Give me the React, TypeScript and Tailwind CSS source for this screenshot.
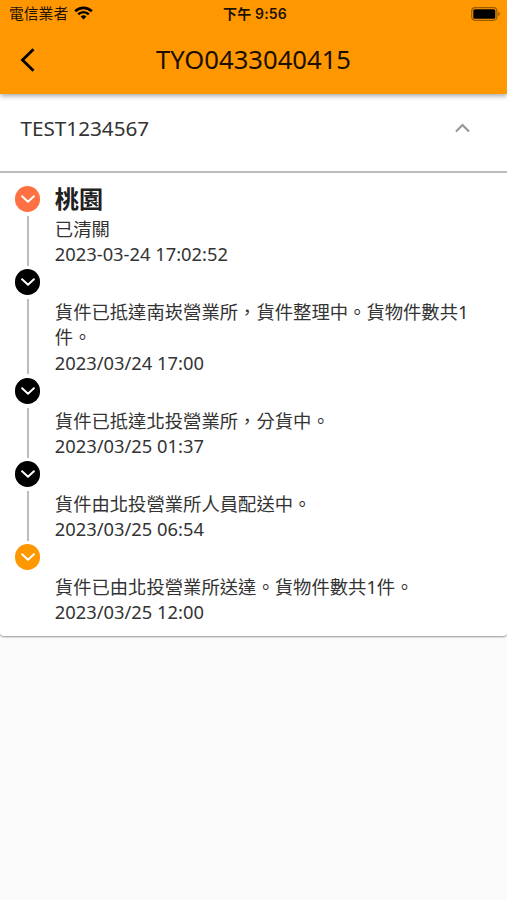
import React from "react";

type Step = {
  title?: string;
  message: string;
  time: string;
  dotClass: string;
};

const STEPS: Step[] = [
  { title: "桃園", message: "已清關", time: "2023-03-24 17:02:52", dotClass: "bg-[#ff7043]" },
  {
    message: "貨件已抵達南崁營業所，貨件整理中。貨物件數共1件。",
    time: "2023/03/24 17:00",
    dotClass: "bg-black",
  },
  { message: "貨件已抵達北投營業所，分貨中。", time: "2023/03/25 01:37", dotClass: "bg-black" },
  { message: "貨件由北投營業所人員配送中。", time: "2023/03/25 06:54", dotClass: "bg-black" },
  {
    message: "貨件已由北投營業所送達。貨物件數共1件。",
    time: "2023/03/25 12:00",
    dotClass: "bg-[#ff9800]",
  },
];

function StatusBar() {
  return (
    <div className="grid h-[27px] grid-cols-3 items-center pl-[9px] pr-[6px] text-[14.8px] leading-none">
      <div className="flex items-center gap-[6px]">
        <span className="whitespace-nowrap text-[#1f1200]">電信業者</span>
        <svg className="h-[14px] w-[19px]" viewBox="0 0 19 14" fill="none" stroke="currentColor">
          <path d="M1.2 5.2a11.8 11.8 0 0 1 16.6 0" strokeWidth="2.7" />
          <path d="M4.2 8.3a7.5 7.5 0 0 1 10.6 0" strokeWidth="2.4" />
          <path d="M6.6 10.6a4.1 4.1 0 0 1 5.8 0L9.5 13.5z" fill="currentColor" stroke="none" />
        </svg>
      </div>
      <span className="whitespace-nowrap text-center font-['Inter','Noto_Sans_CJK_TC',sans-serif] text-[14px] font-semibold tracking-[0.15px] text-[#1f1200]">
        下午 9:56
      </span>
      <svg className="h-[14px] w-[30px] justify-self-end" viewBox="0 0 30 14">
        <rect x="0.7" y="0.7" width="25.2" height="12.6" rx="3.5" fill="none" stroke="#000" strokeOpacity="0.4" strokeWidth="1.2" />
        <rect x="2.3" y="2.2" width="22" height="9.6" rx="1.5" fill="#000" />
        <path d="M27.3 4.8a2.4 2.4 0 0 1 0 4.4z" fill="#000" fillOpacity="0.45" />
      </svg>
    </div>
  );
}

function TimelineStep({ step, isLast }: { step: Step; isLast: boolean }) {
  return (
    <div className="flex gap-[14.5px]">
      <div className="flex w-[25.5px] flex-col items-center pt-[2.2px]">
        <div className={`flex size-[25.5px] shrink-0 items-center justify-center rounded-full ${step.dotClass}`}>
          <svg className="h-[8px] w-[14px]" viewBox="0 0 14 8" fill="none" stroke="#fff" strokeWidth="1.9">
            <path d="M1.1 1.2L7 6.8l5.9-5.6" strokeLinecap="round" strokeLinejoin="round" />
          </svg>
        </div>
        {!isLast && <div className="mb-[1.5px] mt-[4.5px] w-[2px] flex-1 bg-[#bdbdbd]" />}
      </div>
      <div className="-mt-[0.6px] mb-[0.6px] flex-1 text-[18.34px] leading-[25.45px] text-[#333]">
        <h2 className="h-[32.3px] text-[24.2px] font-bold leading-[31.3px] text-[#212121]">
          {step.title}
        </h2>
        <p>{step.message}</p>
        <p>{step.time}</p>
      </div>
    </div>
  );
}

export default function App() {
  return (
    <div className="min-h-[900px] w-full bg-[#fafafa] font-['Noto_Sans','Noto_Sans_CJK_TC',sans-serif] text-black">
      <header className="relative h-[94px] bg-[#ff9800] shadow-[0_2px_5px_rgba(0,0,0,0.35)]">
        <StatusBar />
        <div className="grid h-[66px] grid-cols-[60px_1fr_60px] items-center">
          <svg className="ml-[20px] h-[24px] w-[15px]" viewBox="0 0 15 24" fill="none" stroke="#000" strokeWidth="2.8">
            <path d="M13.5 1.2L2.5 12l11 10.8" />
          </svg>
          <h1 className="text-center text-[25.65px] leading-none text-[#1a0f00]">TYO0433040415</h1>
        </div>
      </header>

      <main className="rounded-b-[4px] bg-white shadow-[0_1px_2px_rgba(0,0,0,0.4)]">
        <div className="flex h-[78.6px] items-start justify-between border-b-2 border-[#bdbdbd] pl-[20.5px] pr-[37px] pt-[20px]">
          <span className="text-[20.7px] leading-[28px] text-[#333]">TEST1234567</span>
          <svg className="mt-[9px] h-[10px] w-[15px]" viewBox="0 0 15 10" fill="none" stroke="#959595" strokeWidth="2.1">
            <path d="M1 8.5l6.5-6.6L14 8.5" />
          </svg>
        </div>
        <div className="pb-[11px] pl-[14.8px] pr-[36px] pt-[11.4px]">
          {STEPS.map((step, idx) => (
            <TimelineStep key={step.time} step={step} isLast={idx === STEPS.length - 1} />
          ))}
        </div>
      </main>
    </div>
  );
}
